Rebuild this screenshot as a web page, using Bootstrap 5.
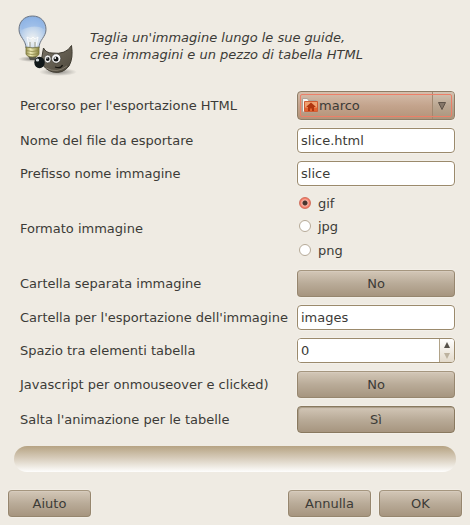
<!DOCTYPE html>
<html lang="it">
<head>
<meta charset="utf-8">
<meta name="viewport" content="width=device-width, initial-scale=1">
<title>Taglia immagine</title>
<link rel="stylesheet" href="https://cdn.jsdelivr.net/npm/bootstrap@5.3.0/dist/css/bootstrap.min.css">
<style>
body { background: #efebe3; color: #3c3b37; font-family: "DejaVu Sans", sans-serif; font-size: 13px; line-height: 17px; }
.intro { padding: 14px 16px 0 15px; gap: 11px; }
.intro-icon { width: 64px; height: 64px; flex: none; }
.options { display: grid; grid-template-columns: minmax(0, 1fr) 158px; column-gap: 6px; row-gap: 8px; align-items: center; padding: 13px 15px 0 20px; }
.options > label, .options > .caption { white-space: nowrap; }
.field { height: 25px; min-height: 0; padding: 0 3px; border: 1px solid #9b8a6c; border-radius: 4px; background: #fff; color: #3c3b37; font-size: 13px; line-height: 17px; box-shadow: 0 0 0 1px #f3f0ea; }
.tan { height: 27px; padding: 0; border: 1px solid #96866e; border-top-color: #a5967f; border-radius: 4px; color: #3c3b37; font-size: 13px; line-height: 17px; background: linear-gradient(#d3c7b7, #b9ab98 50%, #a6957f); box-shadow: 0 0 0 1px #f3efe8, inset 0 1px 0 #d6cbbd; }
.tan:hover { color: #3c3b37; }
.tan.pressed { border-color: #89795f; box-shadow: 0 0 0 1px #f3efe8, inset 1px 1px 1px #a99c87; }
.combo { height: 29px; border: 1px solid #8d7d66; border-radius: 4px; background: linear-gradient(#d5beac, #c4a48d 50%, #b39379); box-shadow: 0 0 0 1px #f3efe8; }
.combo::after { content: ""; position: absolute; inset: 2px; border: 1px solid #ed7f68; border-radius: 2px; pointer-events: none; }
.combo select { appearance: none; border: 0; outline: 0; background: transparent; color: #3c3b37; height: 27px; padding: 0 24px 0 21px; font-size: 13px; }
.combo-icon { position: absolute; left: 4px; top: 5px; pointer-events: none; }
.combo-arrow { position: absolute; right: 0; top: 0; width: 22px; height: 27px; padding-right: 3px; border-left: 1px solid #a18870; background: linear-gradient(#d3c4b3, #bba792 50%, #aa957c); border-radius: 0 3px 3px 0; pointer-events: none; }
.choices { gap: 4px; padding-bottom: 2px; }
.choice { height: 20px; gap: 7px; padding-left: 2px; }
.choices .choice:first-child { height: 18px; }
.choice input { appearance: none; width: 12px; height: 12px; margin: 0; border: 1px solid #b6aa98; border-radius: 50%; background: #fff; }
.choice input:checked { border-color: #d1705f; background: radial-gradient(circle, #47352f 0 2px, #f5b3a5 3px, #f4705a 5px); }
.spin { padding: 0; overflow: hidden; }
.spin input { appearance: textfield; border: 0; outline: 0; min-width: 0; padding: 0 3px; color: #3c3b37; }
.spin input::-webkit-inner-spin-button { display: none; }
.steps { width: 15px; flex: none; border-left: 1px solid #b1a389; background: linear-gradient(#fff, #e3dacb); }
.steps button { flex: 1; border: 0; padding: 0; background: transparent; }
.steps svg, .combo-arrow svg { display: block; margin: auto; }
.track { height: 26px; margin: 13px 14px 0; border-radius: 13px; background: linear-gradient(#b6a383, #d6cbb9 45%, #fefefd); }
.actions { gap: 8px; padding: 18px 8px 8px; }
.actions .tan { width: 83px; }
</style>
<script src="https://cdn.jsdelivr.net/npm/bootstrap@5.3.0/dist/js/bootstrap.bundle.min.js"></script>
</head>
<body>
<form>
<header class="intro d-flex align-items-center">
<svg class="intro-icon" viewBox="0 0 64 64" aria-hidden="true">
<defs>
<radialGradient id="glass" cx=".5" cy=".75" r=".75"><stop offset="0" stop-color="#f3f4f2"/><stop offset=".5" stop-color="#c3d6ec"/><stop offset="1" stop-color="#86ade0"/></radialGradient>
<linearGradient id="brass"><stop offset="0" stop-color="#97904f"/><stop offset=".35" stop-color="#f0edb8"/><stop offset="1" stop-color="#85803c"/></linearGradient>
<linearGradient id="fur" x2="1" y2="1"><stop offset="0" stop-color="#797365"/><stop offset="1" stop-color="#4e483c"/></linearGradient>
<radialGradient id="shade"><stop offset="0" stop-color="#000" stop-opacity=".4"/><stop offset="1" stop-color="#000" stop-opacity="0"/></radialGradient>
</defs>
<ellipse cx="17" cy="45" rx="14" ry="3" fill="url(#shade)"/>
<ellipse cx="43" cy="58" rx="19" ry="4" fill="url(#shade)"/>
<path d="M13 42h9l-2 4h-5z" fill="#55564c"/>
<path d="M17.500 2C9 2 4 8 4 15.500C4 23 11 26 11 34h13C24 26 31 23 31 15.500C31 8 26 2 17.500 2z" fill="url(#glass)" stroke="#6b7482"/>
<path d="M6.500 16C5 8 12 3.500 17.500 3.500C24 3.500 30 9 29 15C23 11 14 12 6.500 16z" fill="#8eb4e8" opacity=".6"/>
<path d="M14 32l-2-9 4 2 2-2 2 2 3-2-2 9" fill="none" stroke="#fff" stroke-opacity=".8"/>
<path d="M15 28v5M20 28v5" stroke="#8d8b70" stroke-opacity=".8"/>
<path d="M11 33q6.500 2 13 0v7q-1 3-6.500 3T11 40z" fill="url(#brass)" stroke="#77743e" stroke-width=".8"/>
<path d="M11 36.500q6 2 13 0M11 39.500q6 2 13 0" fill="none" stroke="#8b8649" stroke-width=".8"/>
<path d="M28.500 34Q31 39 37 39Q51 41 56.500 31.500Q58.500 44 54 52Q48 60 38 58Q30 56 26 48z" fill="url(#fur)" stroke="#3f3b31"/>
<path d="M31 54Q42 60 52 52" fill="none" stroke="#a69e8e" stroke-opacity=".5"/>
<ellipse cx="32.700" cy="45" rx="3.400" ry="4" fill="#f3f3f1" stroke="#2f2d28" stroke-width=".6"/>
<ellipse cx="41.200" cy="44.500" rx="4.600" ry="4.700" fill="#fafafa" stroke="#2f2d28" stroke-width=".6"/>
<circle cx="32.700" cy="45" r="1.900" fill="#151718"/><circle cx="41" cy="45" r="2.500" fill="#151718"/>
<circle cx="32" cy="44" r=".7" fill="#fff"/><circle cx="40.200" cy="44" r=".9" fill="#fff"/>
<ellipse cx="24.500" cy="48.500" rx="5.200" ry="5.800" fill="#111819"/>
<ellipse cx="22.500" cy="46" rx="1.700" ry="1.500" fill="#d3dadd"/>
<path d="M40 53Q46 55 47.500 51" fill="none" stroke="#171510" stroke-width="1.300"/>
</svg>
<p class="mb-0 fst-italic mt-0">Taglia un'immagine lungo le sue guide,<br>crea immagini e un pezzo di tabella HTML</p>
</header>
<main class="options">
<label for="path">Percorso per l'esportazione HTML</label>
<div class="combo position-relative">
<svg class="combo-icon" width="16" height="16" viewBox="0 0 16 16" aria-hidden="true"><path d="M.5 15V1.500h5l1 2h8V15z" fill="#f8f6f3" stroke="#b0a49a"/><path d="M2.500 4.500h13v10h-13z" fill="#f0a070" stroke="#cf5c33"/><path d="M3 10.500h12V14H3z" fill="#e4622f"/><path d="M9 5.500L4.500 9.500V10H6v4h2v-2.500h2V14h2v-4h1.500v-.5z" fill="#b03610"/></svg>
<select id="path" class="w-100"><option>marco</option></select>
<span class="combo-arrow d-flex"><svg width="8" height="8" viewBox="0 0 8 8" aria-hidden="true"><path d="M.5.5h7L4 7.500z" fill="#857668" stroke="#5f5348"/></svg></span>
</div>
<label for="file">Nome del file da esportare</label>
<input id="file" class="field w-100" type="text" value="slice.html">
<label for="prefix">Prefisso nome immagine</label>
<input id="prefix" class="field w-100" type="text" value="slice">
<span class="caption" id="format">Formato immagine</span>
<div class="choices d-flex flex-column" role="radiogroup" aria-labelledby="format">
<label class="choice d-flex align-items-center"><input type="radio" name="fmt" checked>gif</label>
<label class="choice d-flex align-items-center"><input type="radio" name="fmt">jpg</label>
<label class="choice d-flex align-items-center"><input type="radio" name="fmt">png</label>
</div>
<label for="separate">Cartella separata immagine</label>
<button id="separate" class="btn tan w-100" type="button">No</button>
<label for="folder">Cartella per l'esportazione dell'immagine</label>
<input id="folder" class="field w-100" type="text" value="images">
<label for="spacing">Spazio tra elementi tabella</label>
<div class="field spin d-flex">
<input id="spacing" class="flex-grow-1" type="number" min="0" value="0">
<div class="steps d-flex flex-column">
<button type="button" aria-label="Aumenta"><svg width="6" height="6" viewBox="0 0 6 6"><path d="M3 0l3 6H0z" fill="#56514a"/></svg></button>
<button type="button" aria-label="Diminuisci" disabled><svg width="6" height="6" viewBox="0 0 6 6"><path d="M0 0h6L3 6z" fill="#bdb29f"/></svg></button>
</div>
</div>
<label for="script">Javascript per onmouseover e clicked)</label>
<button id="script" class="btn tan w-100" type="button">No</button>
<label for="skip">Salta l'animazione per le tabelle</label>
<button id="skip" class="btn tan pressed w-100" type="button" aria-pressed="true">Sì</button>
</main>
<div class="track" role="progressbar" aria-label="Avanzamento" aria-valuenow="0" aria-valuemin="0" aria-valuemax="100"></div>
<footer class="actions d-flex">
<button class="btn tan me-auto" type="button">Aiuto</button>
<button class="btn tan" type="button">Annulla</button>
<button class="btn tan" type="submit">OK</button>
</footer>
</form>
</body>
</html>
